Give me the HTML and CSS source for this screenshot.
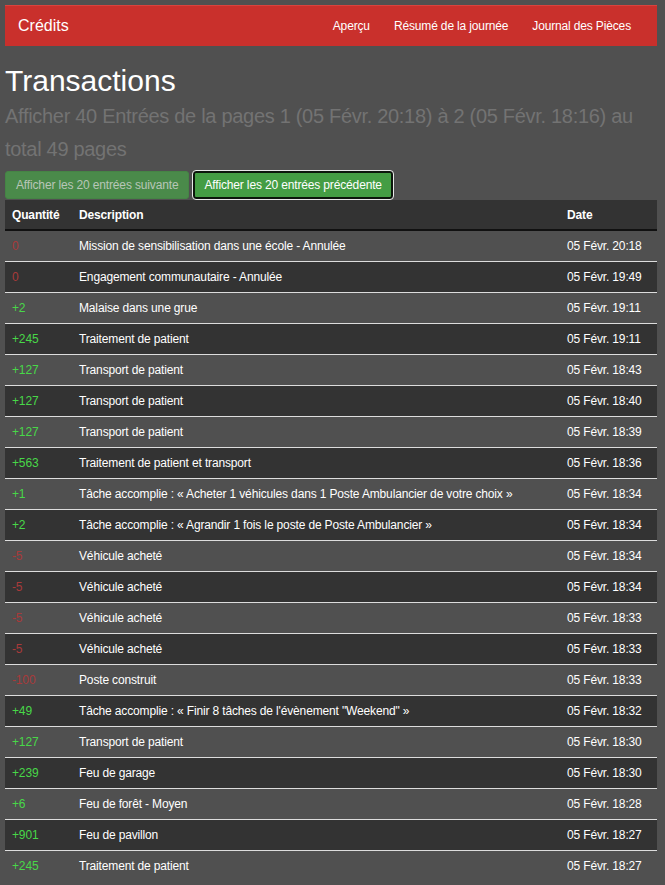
FILE: index.html
```html
<!DOCTYPE html>
<html lang="fr">
<head>
<meta charset="utf-8">
<title>Crédits</title>
<link rel="stylesheet" href="styles.css">
</head>
<body>
<nav class="navbar">
  <span class="brand">Crédits</span>
  <ul class="nav-links">
    <li>Aperçu</li>
    <li>Résumé de la journée</li>
    <li>Journal des Pièces</li>
  </ul>
</nav>
<h1 class="title">Transactions</h1>
<p class="subtitle">Afficher 40 Entrées de la pages 1 (05 Févr. 20:18) à 2 (05 Févr. 18:16) au total 49 pages</p>
<div class="buttons">
  <span class="btn btn-disabled">Afficher les 20 entrées suivante</span>
  <span class="btn btn-active">Afficher les 20 entrées précédente</span>
</div>
<table class="tx">
  <colgroup>
    <col class="col-qty">
    <col>
    <col class="col-date">
  </colgroup>
  <thead>
    <tr><th>Quantité</th><th>Description</th><th>Date</th></tr>
  </thead>
  <tbody>
    <tr><td class="neg">0</td><td>Mission de sensibilisation dans une école - Annulée</td><td>05 Févr. 20:18</td></tr>
    <tr><td class="neg">0</td><td>Engagement communautaire - Annulée</td><td>05 Févr. 19:49</td></tr>
    <tr><td class="pos">+2</td><td>Malaise dans une grue</td><td>05 Févr. 19:11</td></tr>
    <tr><td class="pos">+245</td><td>Traitement de patient</td><td>05 Févr. 19:11</td></tr>
    <tr><td class="pos">+127</td><td>Transport de patient</td><td>05 Févr. 18:43</td></tr>
    <tr><td class="pos">+127</td><td>Transport de patient</td><td>05 Févr. 18:40</td></tr>
    <tr><td class="pos">+127</td><td>Transport de patient</td><td>05 Févr. 18:39</td></tr>
    <tr><td class="pos">+563</td><td>Traitement de patient et transport</td><td>05 Févr. 18:36</td></tr>
    <tr><td class="pos">+1</td><td>Tâche accomplie : « Acheter 1 véhicules dans 1 Poste Ambulancier de votre choix »</td><td>05 Févr. 18:34</td></tr>
    <tr><td class="pos">+2</td><td>Tâche accomplie : « Agrandir 1 fois le poste de Poste Ambulancier »</td><td>05 Févr. 18:34</td></tr>
    <tr><td class="neg">-5</td><td>Véhicule acheté</td><td>05 Févr. 18:34</td></tr>
    <tr><td class="neg">-5</td><td>Véhicule acheté</td><td>05 Févr. 18:34</td></tr>
    <tr><td class="neg">-5</td><td>Véhicule acheté</td><td>05 Févr. 18:33</td></tr>
    <tr><td class="neg">-5</td><td>Véhicule acheté</td><td>05 Févr. 18:33</td></tr>
    <tr><td class="neg">-100</td><td>Poste construit</td><td>05 Févr. 18:33</td></tr>
    <tr><td class="pos">+49</td><td>Tâche accomplie : « Finir 8 tâches de l'évènement "Weekend" »</td><td>05 Févr. 18:32</td></tr>
    <tr><td class="pos">+127</td><td>Transport de patient</td><td>05 Févr. 18:30</td></tr>
    <tr><td class="pos">+239</td><td>Feu de garage</td><td>05 Févr. 18:30</td></tr>
    <tr><td class="pos">+6</td><td>Feu de forêt - Moyen</td><td>05 Févr. 18:28</td></tr>
    <tr><td class="pos">+901</td><td>Feu de pavillon</td><td>05 Févr. 18:27</td></tr>
    <tr><td class="pos">+245</td><td>Traitement de patient</td><td>05 Févr. 18:27</td></tr>
  </tbody>
</table>
</body>
</html>
```
FILE: styles.css
```css
html, body {
  margin: 0;
  padding: 0;
  background: #505050;
  font-family: "Liberation Sans", Arial, sans-serif;
  color: #fff;
}
body {
  padding: 5px 8px 0 5px;
  overflow: hidden;
  height: 880px;
}
.navbar {
  display: flex;
  align-items: center;
  justify-content: space-between;
  height: 41px;
  box-sizing: border-box;
  background: #c9302c;
  border-top: 1px solid #d9433e;
  padding: 0 14px 0 13px;
}
.brand {
  font-size: 16px;
  color: #fff;
}
.nav-links {
  display: flex;
  list-style: none;
  margin: 0;
  padding: 0;
}
.nav-links li {
  font-size: 12px;
  letter-spacing: -0.15px;
  padding: 0 12px;
  color: #fff;
}
.title {
  font-size: 30px;
  font-weight: normal;
  margin: 18px 0 0 0;
  line-height: 33px;
}
.subtitle {
  font-size: 20px;
  letter-spacing: -0.3px;
  color: #737373;
  line-height: 33px;
  margin: 3px 0 5px 0;
  padding-right: 14px;
}
.buttons {
  display: flex;
  gap: 4px;
  align-items: center;
}
.btn {
  font-size: 12px;
  letter-spacing: -0.15px;
  display: inline-block;
  box-sizing: border-box;
  border-radius: 3px;
}
.btn-disabled {
  background: #4a8a4a;
  color: #b8c6b8;
  border: 1px solid #458445;
  padding: 6px 10px;
  height: 28px;
  line-height: 14px;
}
.btn-active {
  background: #449d44;
  color: #fff;
  border: 2px solid #0c160c;
  outline: 1px solid #e8e8e8;
  padding: 5px 9px;
  height: 28px;
  line-height: 14px;
}
.tx {
  width: 652px;
  table-layout: fixed;
  border-collapse: collapse;
  font-size: 12px;
  letter-spacing: -0.15px;
  margin-top: 1px;
}
.col-qty { width: 66px; }
.col-date { width: 98px; }
.tx th {
  background: #333;
  text-align: left;
  font-weight: bold;
  height: 29px;
  padding: 0 8px;
  border-bottom: 2px solid #111;
}
.tx th:first-child, .tx td:first-child { padding-left: 7px; }
.tx td {
  height: 30px;
  padding: 0 8px;
  border-top: 1px solid #ddd;
  color: #fff;
  white-space: nowrap;
}
.tx tbody tr:first-child td { border-top: none; }
.tx tbody tr:nth-child(odd) td { background: #505050; }
.tx tbody tr:nth-child(even) td { background: #333; }
.tx td.pos { color: #48d848; }
.tx td.neg { color: #a83a3a; }
```
